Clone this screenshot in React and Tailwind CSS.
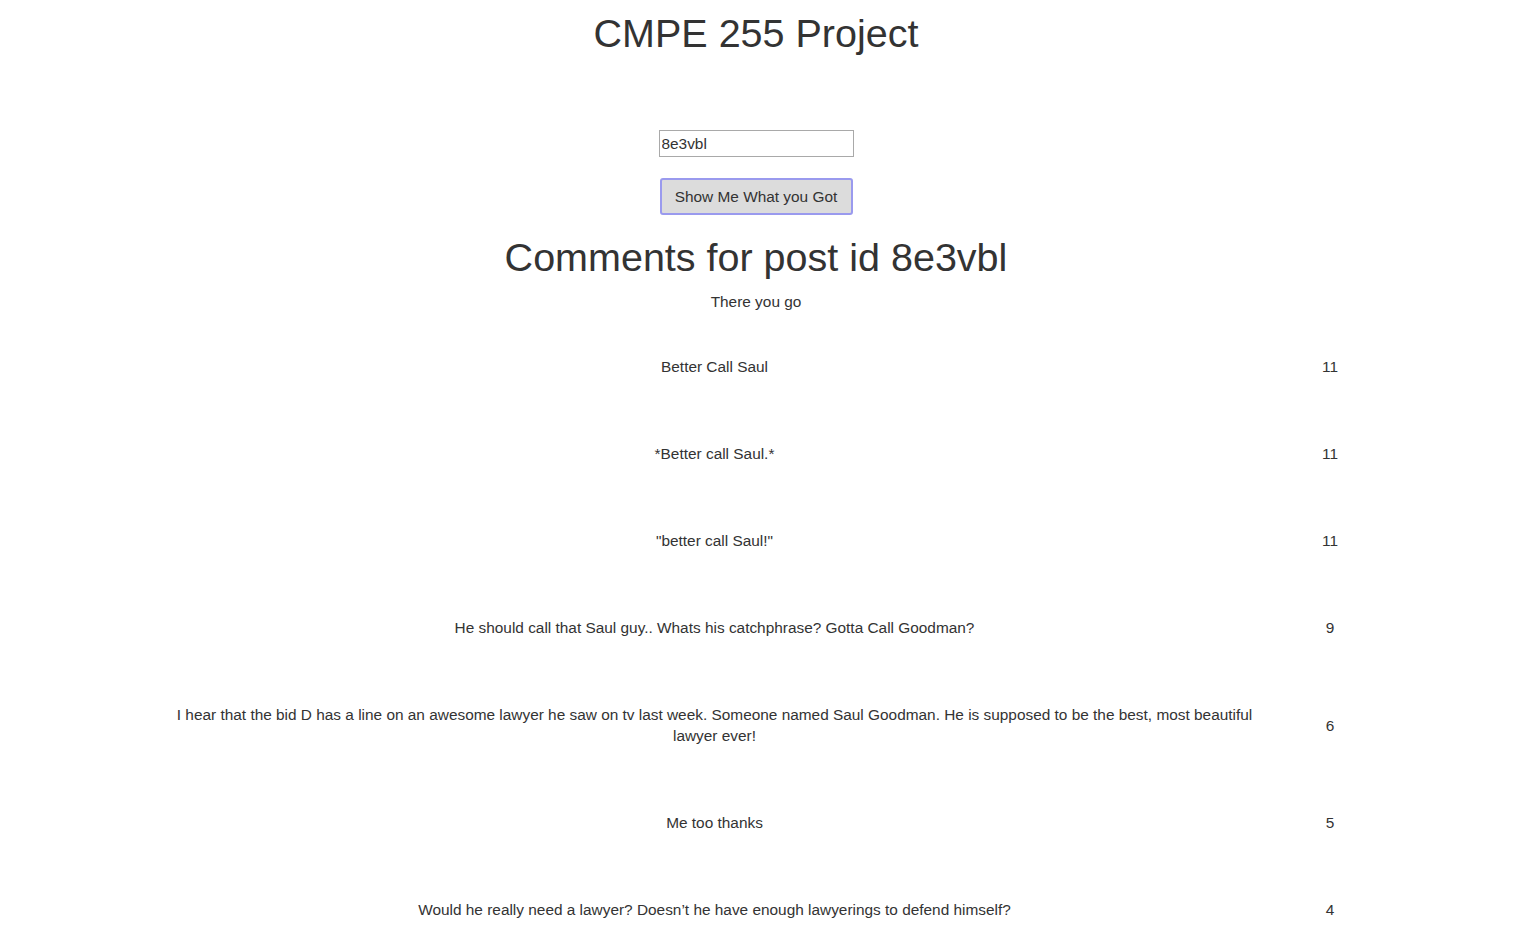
import React, { useState } from "react";

const comments = [
  { text: "Better Call Saul", score: 11 },
  { text: "*Better call Saul.*", score: 11 },
  { text: "\"better call Saul!\"", score: 11 },
  { text: "He should call that Saul guy.. Whats his catchphrase? Gotta Call Goodman?", score: 9 },
  {
    text: "I hear that the bid D has a line on an awesome lawyer he saw on tv last week. Someone named Saul Goodman. He is supposed to be the best, most beautiful lawyer ever!",
    score: 6,
  },
  { text: "Me too thanks", score: 5 },
  { text: "Would he really need a lawyer? Doesn\u2019t he have enough lawyerings to defend himself?", score: 4 },
];

const App = () => {
  const [postId, setPostId] = useState("8e3vbl");

  return (
    <div className="min-h-screen bg-white text-[#333] font-['Liberation_Sans',Arial,sans-serif] text-[15.4px] leading-[21px]">
      <div className="w-[1512px]">
        <h1 className="pt-[12px] text-center text-[39.5px] leading-[43px] font-normal">CMPE 255 Project</h1>

        <div className="mt-[75px] flex flex-col items-center">
          <input
            type="text"
            value={postId}
            onChange={(e) => setPostId(e.target.value)}
            className="w-[195px] h-[27px] border border-[#a9a9a9] px-[2px] text-[15.4px] text-[#333] outline-none"
          />
          <button className="mt-[21px] w-[193px] h-[37px] rounded-[3px] border-2 border-[#9a9aee] bg-[#dcdcdc] text-[15.4px] text-[#333]">
            Show Me What you Got
          </button>
        </div>

        <h1 className="mt-[21px] text-center text-[39.5px] leading-[43px] font-normal">Comments for post id {postId}</h1>
        <p className="mt-[12px] text-center">There you go</p>

        <div className="mt-[11px] pl-[169px]">
          {comments.map((c, i) => (
            <div key={i} className="flex items-center py-[33px]">
              <div className="w-[1091px] text-center">{c.text}</div>
              <div className="w-[140px] text-center">{c.score}</div>
            </div>
          ))}
        </div>
      </div>
    </div>
  );
};

export default App;
